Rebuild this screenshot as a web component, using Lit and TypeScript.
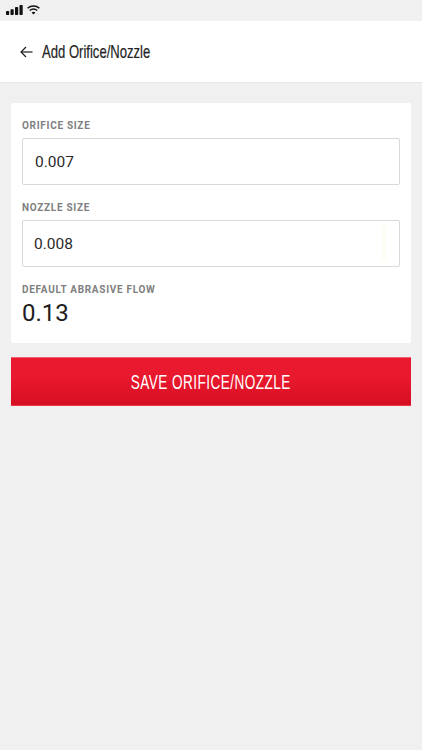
import { LitElement, html, css } from "lit";
import { customElement } from "lit/decorators.js";

@customElement("app-root")
export class AppRoot extends LitElement {
  static styles = css`
    :host { display: block; width: 422px; height: 750px; background: #f0f0f0; font-family: Roboto, "Liberation Sans", sans-serif; overflow: hidden; }
    .status { height: 21px; display: flex; align-items: flex-start; gap: 4px; padding: 5px 0 0 6px; box-sizing: border-box; }
    .status svg { display: block; }
    .header { height: 61px; background: #fff; display: flex; align-items: center; padding-left: 20px; gap: 9px; border-bottom: 1px solid #e6e6e6; box-sizing: content-box; }
    .title { font-family: "Liberation Sans", sans-serif; font-size: 19px; color: #222; display: inline-block; transform: scaleX(0.688); transform-origin: left center; white-space: nowrap; line-height: 24px; -webkit-text-stroke: 0.2px #222; }
    .main { padding: 20px 11px 0 11px; display: flex; flex-direction: column; gap: 14px; }
    .card { background: #fff; height: 240px; box-sizing: border-box; padding: 16px 11px 0 11px; border-radius: 2px; }
    .label { font-size: 10px; line-height: 13px; font-weight: 700; letter-spacing: 0.7px; color: #808080; }
    .input { height: 47px; box-sizing: border-box; border: 1px solid #d9d9d9; border-radius: 2px; margin-top: 6px; margin-bottom: 16px; display: flex; align-items: center; padding-left: 12px; font-size: 15.5px; color: #2b2b2b; position: relative; }
    .hint { position: absolute; right: 13px; top: 6px; width: 4px; height: 33px; background: #fdfdf3; }
    .input.second { padding-left: 11px; padding-top: 1px; }
    .value { font-size: 24px; line-height: 28px; color: #1d1d1d; margin-top: 3px; }
    .button { margin-left: -0.5px; width: 400.5px; height: 49px; box-sizing: border-box; background: linear-gradient(#e91a2f, #e8182d 45%, #d60e22); border: 0; border-top: 1px solid #f0606f; border-bottom: 1px solid #e83a4b; display: flex; align-items: center; justify-content: center; padding: 0; }
    .button span { font-family: "Liberation Sans", sans-serif; font-size: 21px; color: #fff; display: inline-block; transform: scaleX(0.647); white-space: nowrap; letter-spacing: 0.7px; }
  `;

  render() {
    return html`
      <div class="status">
        <svg width="17" height="10" viewBox="0 0 17 10" fill="#111">
          <rect x="0" y="6" width="3.2" height="4" rx="0.7"></rect>
          <rect x="4.5" y="4.2" width="3.2" height="5.8" rx="0.7"></rect>
          <rect x="9" y="2" width="3.2" height="8" rx="0.7"></rect>
          <rect x="13.5" y="0" width="3.2" height="10" rx="0.7"></rect>
        </svg>
        <svg width="13" height="10" viewBox="0 0 13 10" fill="none" stroke="#111" stroke-width="1.5">
          <path d="M.6 3.2 C3.9 .2 9.1 .2 12.4 3.2"></path>
          <path d="M2.7 5.5 C4.9 3.7 8.1 3.7 10.3 5.5"></path>
          <path d="M4.6 7.4 L6.5 9.6 L8.4 7.4 C7.3 6.4 5.7 6.4 4.6 7.4 Z" fill="#111" stroke="none"></path>
        </svg>
      </div>
      <div class="header">
        <svg width="13" height="12" viewBox="0 0 13 12" fill="none" stroke="#1c1c1c" stroke-width="1.2">
          <path d="M12.5 6 H1.2"></path>
          <path d="M6 1 L1 6 L6 11"></path>
        </svg>
        <span class="title">Add Orifice/Nozzle</span>
      </div>
      <div class="main">
        <div class="card">
          <div class="label">ORIFICE SIZE</div>
          <div class="input">0.007</div>
          <div class="label">NOZZLE SIZE</div>
          <div class="input second">0.008<i class="hint"></i></div>
          <div class="label">DEFAULT ABRASIVE FLOW</div>
          <div class="value">0.13</div>
        </div>
        <div class="button"><span>SAVE ORIFICE/NOZZLE</span></div>
      </div>
    `;
  }
}
